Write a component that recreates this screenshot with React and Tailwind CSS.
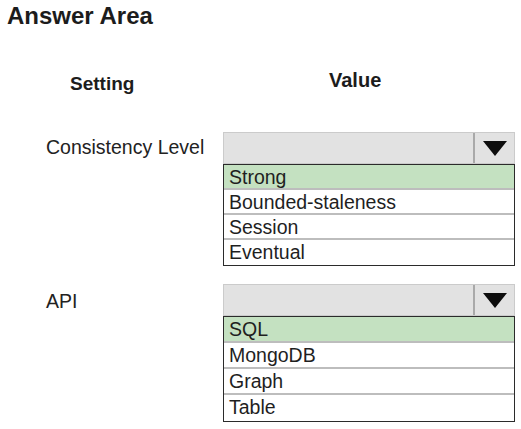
const settings = [
  {
    label: "Consistency Level",
    options: ["Strong", "Bounded-staleness", "Session", "Eventual"],
    rowClass: "h-[25px] leading-[24px]",
    labelClass: "pt-[6px]",
  },
  {
    label: "API",
    options: ["SQL", "MongoDB", "Graph", "Table"],
    rowClass: "h-[26px] leading-[25px]",
    labelClass: "pt-[8px]",
  },
]

function Dropdown({ options, rowClass }) {
  return (
    <div className="flex w-[292px] flex-col">
      <div className="flex h-[32px] border border-[#cbcbcb] bg-[#e2e2e2]">
        <div className="flex-1" />
        <div className="w-[2px] bg-[#a9a9a9]" />
        <div className="flex w-[39px] items-center justify-center">
          <svg width="24" height="15" viewBox="0 0 24 15">
            <polygon points="0,0 24,0 12,15" fill="#0d0d0d" />
          </svg>
        </div>
      </div>
      <div className="border-[1.5px] border-[#2b2b2b] bg-white">
        {options.map((opt, i) => (
          <div
            key={opt}
            className={`${rowClass} px-[5px] text-[19.5px] text-[#1f1f1f] ${
              i === 0 ? "bg-[#c4e1c1]" : "bg-white"
            } ${i < options.length - 1 ? "border-b-2 border-[#bdbdbd]" : ""}`}
          >
            {opt}
          </div>
        ))}
      </div>
    </div>
  )
}

export default function App() {
  return (
    <div
      className="h-[429px] w-[521px] bg-white text-[#1c1c1c]"
      style={{ fontFamily: '"Liberation Sans", Arial, sans-serif' }}
    >
      <h1 className="pl-[7px] pt-[4px] text-[24px] font-bold leading-none">
        Answer Area
      </h1>

      <div className="mt-[42px] flex items-start">
        <div className="w-[329px] pl-[70px] pt-[4px] text-[19px] font-bold leading-none">
          Setting
        </div>
        <div className="text-[20px] font-bold leading-none">Value</div>
      </div>

      <div className="mt-[39px] flex flex-col gap-[18px]">
        {settings.map((s) => (
          <div key={s.label} className="flex items-start">
            <div
              className={`w-[223px] pl-[46px] text-[19.5px] leading-none text-[#222] ${s.labelClass}`}
            >
              {s.label}
            </div>
            <Dropdown options={s.options} rowClass={s.rowClass} />
          </div>
        ))}
      </div>
    </div>
  )
}
